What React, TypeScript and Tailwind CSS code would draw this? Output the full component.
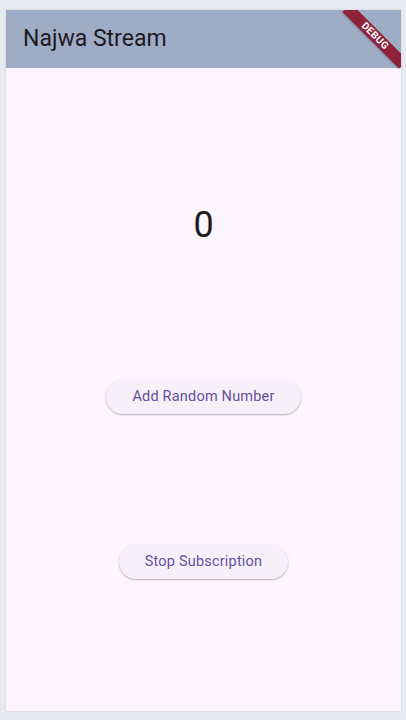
export default function App() {
  return (
    <div
      className="h-[720px] w-[406px] bg-[#e8eaf2] pt-[10px] pl-[6px] pr-[5px] pb-[9px]"
      style={{ fontFamily: "Roboto, 'Noto Sans', sans-serif" }}
    >
      <div className="relative flex h-[701px] w-[395px] flex-col overflow-hidden bg-[#fdf4fe] shadow-[0_0_2px_rgba(0,0,0,0.15)]">
        {/* app bar */}
        <div className="flex h-[58px] shrink-0 items-center bg-[#9eacc6] pl-[17px]">
          <h1 className="text-[23px] leading-7 text-[#1d1b20]">Najwa Stream</h1>
        </div>

        {/* body */}
        <div className="flex flex-1 flex-col items-center">
          <p className="mt-[135px] h-[44px] text-[36px] leading-[44px] text-[#1d1b20]">0</p>
          <button className="mt-[133px] h-[34px] rounded-full bg-[#f6f0f8] px-[26px] text-[14.5px] tracking-[0.2px] text-[#65509f] shadow-[0_1px_2px_rgba(0,0,0,0.28)]">
            Add Random Number
          </button>
          <button className="mt-[131px] h-[34px] rounded-full bg-[#f6f0f8] px-[26px] text-[14.5px] tracking-[0.2px] text-[#65509f] shadow-[0_1px_2px_rgba(0,0,0,0.28)]">
            Stop Subscription
          </button>
        </div>

        {/* debug banner */}
        <div className="absolute right-[-14px] top-[20px] flex h-[12px] w-[80px] rotate-45 items-center justify-center bg-[#8e2239] shadow-[0_1px_2px_rgba(0,0,0,0.25)]">
          <span className="text-[10px] font-bold leading-none tracking-[0.3px] text-white">DEBUG</span>
        </div>
      </div>
    </div>
  );
}
